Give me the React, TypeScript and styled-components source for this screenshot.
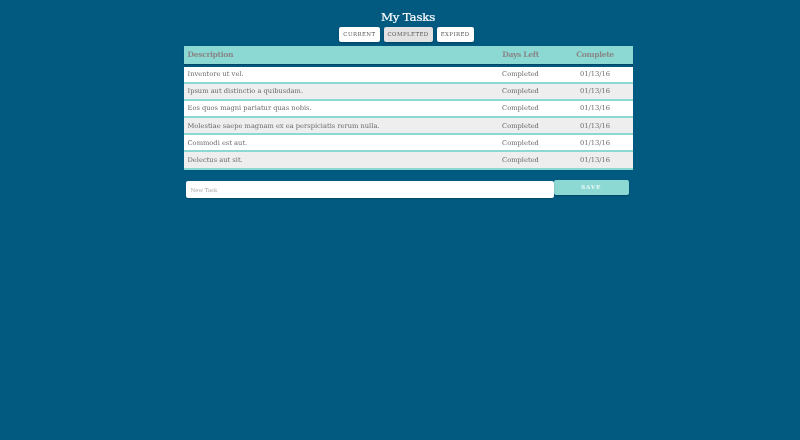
import React from "react";
import styled, { createGlobalStyle } from "styled-components";

const Global = createGlobalStyle`
  html, body { margin: 0; padding: 0; background: #035a80; }
  body { font-family: "DejaVu Serif", "Liberation Serif", serif; }
  * { box-sizing: border-box; }
`;

const Page = styled.div`
  width: 800px;
  height: 440px;
  padding-left: 16px;
  padding-top: 8px;
  display: flex;
  flex-direction: column;
  align-items: center;
  background: #035a80;
`;

const Title = styled.h1`
  margin: 0;
  font-size: 11.8px;
  line-height: 18px;
  font-weight: 400;
  color: #ffffff;
  font-family: "DejaVu Serif", serif;
  letter-spacing: -0.2px;
  -webkit-text-stroke: 0.2px #ffffff;
  filter: grayscale(1);
`;

const Tabs = styled.div`
  display: flex;
  gap: 4px;
  margin-top: 1px;
  margin-left: -3px;
`;

const Tab = styled.button<{ $active?: boolean }>`
  height: 14.5px;
  padding: 0 4px;
  border: none;
  border-radius: 2px;
  background: ${(p) => (p.$active ? "#e3e3e3" : "#ffffff")};
  color: #555;
  font-family: "DejaVu Serif", serif;
  font-size: 5.4px;
  letter-spacing: 0.45px;
  box-shadow: 0 1px 2px rgba(0, 0, 0, 0.25);
  display: flex;
  align-items: center;
  justify-content: center;
  cursor: pointer;
`;

const Label = styled.span`
  filter: grayscale(1);
`;

const Table = styled.div`
  width: 449px;
  margin-top: 4px;
  display: flex;
  flex-direction: column;
`;

const Grid = `
  display: grid;
  grid-template-columns: 1fr 74px 75px;
  align-items: center;
`;

const HeadRow = styled.div`
  ${Grid}
  height: 18.5px;
  background: #8cd8d2;
  color: #7d8b8b;
  font-weight: 700;
  font-size: 7.6px;
  letter-spacing: -0.35px;
  margin-bottom: 2.5px;
  box-shadow: 0 1px 1px rgba(0, 0, 0, 0.2);
`;

const Row = styled.div<{ $alt?: boolean }>`
  ${Grid}
  height: 17.2px;
  background: ${(p) => (p.$alt ? "#eeeeee" : "#ffffff")};
  border-bottom: 2px solid #8cd8d2;
  color: #6a6a6a;
  font-size: 6.7px;
`;

const Cell = styled.div<{ $center?: boolean }>`
  padding-left: ${(p) => (p.$center ? "0" : "4px")};
  text-align: ${(p) => (p.$center ? "center" : "left")};
  white-space: nowrap;
  filter: grayscale(1);
`;

const Form = styled.div`
  width: 449px;
  margin-top: 11.7px;
  display: flex;
  align-items: flex-start;
  padding-left: 2px;
`;

const Input = styled.input`
  width: 368px;
  height: 16.5px;
  border: none;
  border-radius: 2px;
  background: #ffffff;
  padding: 0 5px;
  font-family: "DejaVu Serif", serif;
  font-size: 5.4px;
  color: #999;
  box-shadow: 0 1px 2px rgba(0, 0, 0, 0.2);
  outline: none;
  filter: grayscale(1);
  &::placeholder { color: #a4a4a4; }
`;

const Save = styled.button`
  width: 75px;
  height: 15px;
  margin-top: -1.7px;
  border: none;
  border-radius: 2px;
  background: #8cd8d2;
  color: #eefafa;
  font-family: "DejaVu Serif", serif;
  font-weight: 700;
  font-size: 5.6px;
  letter-spacing: 0.9px;
  box-shadow: 0 1px 2px rgba(0, 0, 0, 0.25);
  cursor: pointer;
`;

const tasks = [
  "Inventore ut vel.",
  "Ipsum aut distinctio a quibusdam.",
  "Eos quos magni pariatur quas nobis.",
  "Molestiae saepe magnam ex ea perspiciatis rerum nulla.",
  "Commodi est aut.",
  "Delectus aut sit.",
];

export default function App() {
  return (
    <>
      <Global />
      <Page>
        <Title>My Tasks</Title>
        <Tabs>
          <Tab><Label>CURRENT</Label></Tab>
          <Tab $active><Label>COMPLETED</Label></Tab>
          <Tab><Label>EXPIRED</Label></Tab>
        </Tabs>
        <Table>
          <HeadRow>
            <Cell>Description</Cell>
            <Cell $center>Days Left</Cell>
            <Cell $center>Complete</Cell>
          </HeadRow>
          {tasks.map((t, i) => (
            <Row key={t} $alt={i % 2 === 1}>
              <Cell>{t}</Cell>
              <Cell $center>Completed</Cell>
              <Cell $center>01/13/16</Cell>
            </Row>
          ))}
        </Table>
        <Form>
          <Input placeholder="New Task" />
          <Save>SAVE</Save>
        </Form>
      </Page>
    </>
  );
}
